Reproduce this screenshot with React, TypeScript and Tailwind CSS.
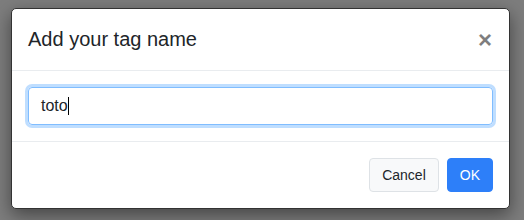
export default function App() {
  return (
    <div className="h-[220px] w-full overflow-hidden bg-[#7d7d7d] pt-[8px] pl-[11px] font-['Liberation_Sans',Arial,sans-serif] text-[#212529]">
      <div className="w-[499px] rounded-[5px] border border-[#333] bg-white shadow-[0_6px_18px_rgba(0,0,0,0.45)]">
        <div className="flex items-center justify-between border-b border-[#e9ecef] p-4">
          <h5 className="text-[20px] leading-[29px] font-medium">Add your tag name</h5>
          <button className="mr-[1px] text-[24px] leading-none font-bold text-black opacity-50">×</button>
        </div>
        <div className="p-4">
          <div className="flex h-[38px] items-center rounded-[4px] border border-[#80bdff] px-3 text-[16px] text-[#495057] shadow-[0_0_0_3px_rgba(0,123,255,0.25)]">
            <span className="text-[#212529]">toto</span>
            <span className="h-[18px] w-px bg-black" />
          </div>
        </div>
        <div className="flex justify-end gap-2 border-t border-[#e9ecef] p-4">
          <button className="h-[34px] rounded-[4px] border border-[#dee2e6] bg-[#f8f9fa] px-3 text-[14px] text-[#212529]">
            Cancel
          </button>
          <button className="h-[34px] rounded-[4px] border border-[#2d7ff9] bg-[#2d7ff9] px-3 text-[14px] text-white">
            OK
          </button>
        </div>
      </div>
    </div>
  );
}
